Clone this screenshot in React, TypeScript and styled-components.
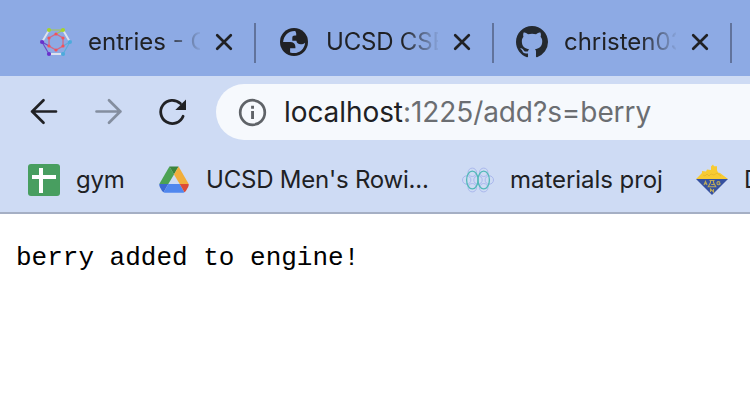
import React from "react";
import styled, { createGlobalStyle } from "styled-components";

const GlobalStyle = createGlobalStyle`
  body { margin: 0; background: #fff; overflow: hidden; }
  svg { display: block; flex: none; }
`;

const Window = styled.div`
  width: 750px;
  height: 412px;
  overflow: hidden;
  background: #fff;
  font-family: Inter, "Liberation Sans", sans-serif;
  color: #202124;
`;

const TabStrip = styled.div`
  display: flex;
  height: 76px;
  padding-left: 18px;
  background: #8daae4;
`;

const Tab = styled.div`
  box-sizing: border-box;
  display: flex;
  align-items: center;
  flex: none;
  width: 238px;
  height: 40px;
  margin-top: 23px;
  padding: 0 20px 0 22px;
  border-right: 2px solid #61739c;
`;

const TabIcon = styled.div`
  display: flex;
  justify-content: center;
  flex: none;
  width: 32px;
  margin-top: -2px;
`;

const TabTitle = styled.div<{ $spacing: number }>`
  flex: none;
  width: 112px;
  margin: -2px 0 0 16px;
  overflow: hidden;
  white-space: nowrap;
  font-size: 24px;
  line-height: 34px;
  letter-spacing: ${(p) => p.$spacing}px;
  mask-image: linear-gradient(to right, #000 68%, transparent 102%);
`;

const TabClose = styled.div`
  margin: -2px 0 0 14px;
`;

const Toolbar = styled.div`
  display: flex;
  align-items: center;
  height: 72px;
  background: #cedbf4;
`;

const NavButtons = styled.div`
  display: flex;
  flex: none;
  gap: 32px;
  width: 188px;
  padding-left: 28px;
`;

const AddressBar = styled.div`
  box-sizing: border-box;
  display: flex;
  align-items: center;
  gap: 17px;
  flex: none;
  width: 600px;
  height: 56px;
  padding-left: 22px;
  border-radius: 28px;
  background: #f6f9fd;
`;

const Url = styled.div`
  font-size: 28px;
  line-height: 36px;
  letter-spacing: -0.08px;
  white-space: nowrap;
  color: #6b6e72;
`;

const Host = styled.span`
  color: #202124;
`;

const BookmarksBar = styled.div`
  box-sizing: border-box;
  display: flex;
  height: 66px;
  padding: 16px 0 0 28px;
  border-bottom: 2px solid #a5afc4;
  background: #cedbf4;
`;

const Bookmark = styled.div<{ $width: number; $spacing?: number }>`
  display: flex;
  flex: none;
  gap: 16px;
  width: ${(p) => p.$width}px;
  height: 32px;
  font-size: 24px;
  line-height: 32px;
  letter-spacing: ${(p) => p.$spacing ?? 0}px;
  white-space: nowrap;
`;

const Page = styled.pre`
  margin: 0;
  padding: 29px 16px;
  font: 26px/30px "Liberation Mono", monospace;
  color: #000;
`;

const CloseIcon = () => (
  <svg width="20" height="20" viewBox="0 0 20 20" fill="none" stroke="#202124" strokeWidth="2.7" strokeLinecap="round">
    <path d="M3.2 3.2 16.8 16.8M16.8 3.2 3.2 16.8" />
  </svg>
);

const GraphIcon = () => (
  <svg width="32" height="32" viewBox="0 0 32 32" fill="none">
    <path d="M9 4 2 16M23 4 30 16M9 28h14" stroke="#dde2ee" strokeWidth="1.9" />
    <path d="M9 4h14l-7 4" stroke="#a5c84f" strokeWidth="1.2" />
    <path d="M9 28 2 16l7 4" stroke="#7047c8" strokeWidth="1.2" />
    <path d="m23 28 7-12-7 4" stroke="#5aaedb" strokeWidth="1.2" />
    <path d="m16 8 7 4v8l-7 4-7-4v-8z" stroke="#d06b88" strokeWidth="1.3" />
    <g fill="#f55258">
      <circle cx="16" cy="8" r="1.6" /><circle cx="23" cy="12" r="1.6" /><circle cx="23" cy="20" r="1.6" />
      <circle cx="16" cy="24" r="1.6" /><circle cx="9" cy="20" r="1.6" /><circle cx="9" cy="12" r="1.6" />
    </g>
    <g fill="#a5d42f"><circle cx="9" cy="4" r="2.1" /><circle cx="23" cy="4" r="2.1" /></g>
    <g fill="#6930cc"><circle cx="2.1" cy="16" r="2.1" /><circle cx="9" cy="28" r="2.1" /></g>
    <g fill="#4cabdc"><circle cx="29.9" cy="16" r="2.1" /><circle cx="23" cy="28" r="2.1" /></g>
  </svg>
);

const GlobeIcon = () => (
  <svg width="28" height="28" viewBox="0 0 28 28">
    <circle cx="14" cy="14" r="14" fill="#202124" />
    <path
      fill="#8daae4"
      d="M15.3 2.9C8.7 2.6 3.8 7.3 3.1 13.9H10c3.4 0 5.4 1.7 5.4 4.8v1.5h-5.3v4.2c7.4 2.6 14.4-2.5 15-9.7-1.3 1.1-2.6 1.5-4.3 1.5-2.7 0-4.2-1.2-4.4-3.5h-4.1V9.8c0-1.5.9-2.2 2.6-2.2h1.3V5.4c0-.9-.6-1.3-.9-2.5Z"
    />
  </svg>
);

const GithubIcon = () => (
  <svg width="32" height="32" viewBox="0 0 16 16" fill="#24292f">
    <path d="M8 0C3.58 0 0 3.58 0 8c0 3.54 2.29 6.53 5.47 7.59.4.07.55-.17.55-.38 0-.19-.01-.82-.01-1.49-2.01.37-2.53-.49-2.69-.94-.09-.23-.48-.94-.82-1.13-.28-.15-.68-.52-.01-.53.63-.01 1.08.58 1.23.82.72 1.21 1.87.87 2.33.66.07-.52.28-.87.51-1.07-1.78-.2-3.64-.89-3.64-3.95 0-.87.31-1.59.82-2.15-.08-.2-.36-1.02.08-2.12 0 0 .67-.21 2.2.82.64-.18 1.32-.27 2-.27s1.36.09 2 .27c1.53-1.04 2.2-.82 2.2-.82.44 1.1.16 1.92.08 2.12.51.56.82 1.27.82 2.15 0 3.07-1.87 3.75-3.65 3.95.29.25.54.73.54 1.48 0 1.07-.01 1.93-.01 2.2 0 .21.15.46.55.38A8.01 8.01 0 0 0 16 8c0-4.42-3.58-8-8-8Z" />
  </svg>
);

const ArrowIcon = ({ forward = false }: { forward?: boolean }) => (
  <svg width="32" height="32" viewBox="0 0 32 32" fill="none" stroke={forward ? "#848e9f" : "#202124"} strokeWidth="2.7" strokeLinecap="round" strokeLinejoin="round">
    <path d={forward ? "M4.5 15.5h24M17 4.2 28.3 15.5 17 26.8" : "M28 15.5H4M15.5 4.2 4.2 15.5l11.3 11.3"} />
  </svg>
);

const ReloadIcon = () => (
  <svg width="32" height="32" viewBox="0 0 32 32">
    <path d="M24.4 7.6A11.6 11.6 0 1 0 27.1 20.2" fill="none" stroke="#202124" strokeWidth="2.8" strokeLinecap="round" />
    <path d="M30 3.5v10.5H19.3Z" fill="#202124" />
  </svg>
);

const InfoIcon = () => (
  <svg width="29" height="29" viewBox="0 0 29 29">
    <circle cx="14.5" cy="14.5" r="12.3" fill="none" stroke="#5f6368" strokeWidth="2.7" />
    <path d="M13.1 7.8H16v2.9h-2.9zM13.1 13H16v8h-2.9z" fill="#5f6368" />
  </svg>
);

const SheetIcon = () => (
  <svg width="32" height="32" viewBox="0 0 32 32">
    <rect width="32" height="32" rx="3" fill="#489e60" />
    <path d="M4 11h7V4h4v7h13v4H15v14h-4V15H4z" fill="#fff" />
  </svg>
);

const DriveIcon = () => (
  <svg width="32" height="32" viewBox="0 0 32 32">
    <path d="M11.4 2.5 1.3 20h9L16 10.4Z" fill="#4ba253" />
    <path d="M11.4 2.5h9.2L16 10.4Z" fill="#3b843c" />
    <path d="M20.6 2.5 30.7 20h-9L16 10.4Z" fill="#f1ae3b" />
    <path d="M1.3 20h9l-4.7 8.2c-.8-.4-1.3-1-1.8-1.8L2 23.3c-.5-.9-.8-1.9-.7-3.3Z" fill="#3b69d1" />
    <path d="M10.3 20h11.4l4.7 8.2c-.6.4-1.3.5-2 .5H7.7c-.8 0-1.5-.1-2.1-.5Z" fill="#5087ee" />
    <path d="M21.7 20h9c.1 1.4-.2 2.4-.7 3.3l-1.8 3.1c-.5.8-1 1.4-1.8 1.8Z" fill="#dc4c37" />
  </svg>
);

const MaterialsIcon = () => (
  <svg width="32" height="32" viewBox="0 0 32 32" fill="none">
    <g stroke="#aab8ed" strokeWidth="1">
      <circle cx="10.3" cy="8.3" r="4.2" /><circle cx="21.7" cy="8.3" r="4.2" />
      <circle cx="4.7" cy="16" r="4.2" /><circle cx="16" cy="16" r="4.2" /><circle cx="27.3" cy="16" r="4.2" />
      <circle cx="10.3" cy="23.7" r="4.2" /><circle cx="21.7" cy="23.7" r="4.2" />
    </g>
    <g stroke="#53b9b9" strokeWidth="1.3">
      <ellipse cx="10.3" cy="16" rx="5.7" ry="8.9" /><ellipse cx="21.7" cy="16" rx="5.7" ry="8.9" />
    </g>
  </svg>
);

const CrestIcon = () => (
  <svg width="32" height="32" viewBox="0 0 32 32">
    <path d="M0 15 6 9V7l4 .5 1-2 4 .4V2.5l2-2 1 1.8h3v4l1 2.2 2 .5 8 6Z" fill="#f8cb32" />
    <path d="m7 11 2 1 2-2 2 2 2-2 3 1 3-2 4 3" fill="none" stroke="#e3b12c" strokeWidth=".7" />
    <path d="M0 15h32L16 31Z" fill="#36519f" />
    <path d="m8 21 1.5-3.5L11 21m-2.5-1.2h2M24 18.2c-2-1.4-3.2 0-3 1.3.2 1.6 2 1.6 3 .7v-1h-1.3M14.5 28v-3l3 3v-3M13.5 16.5h5m-4 0v2l-2.3 4.3h7.6l-2.3-4.3v-2m-2.3 4h3" fill="none" stroke="#baa95c" strokeWidth="1.1" />
  </svg>
);

const tabs = [
  { title: "entries - Google", icon: <GraphIcon />, spacing: 0 },
  { title: "UCSD CSE", icon: <GlobeIcon />, spacing: -0.2 },
  { title: "christen03", icon: <GithubIcon />, spacing: -0.02 },
];

const bookmarks = [
  { label: "gym", icon: <SheetIcon />, width: 130, spacing: -0.2 },
  { label: "UCSD Men's Rowi...", icon: <DriveIcon />, width: 304, spacing: -0.22 },
  { label: "materials proj", icon: <MaterialsIcon />, width: 234, spacing: -0.05 },
  { label: "D", icon: <CrestIcon />, width: 120, spacing: 0 },
];

export default function App() {
  return (
    <Window>
      <GlobalStyle />
      <TabStrip>
        {tabs.map((tab) => (
          <Tab key={tab.title}>
            <TabIcon>{tab.icon}</TabIcon>
            <TabTitle $spacing={tab.spacing}>{tab.title}</TabTitle>
            <TabClose><CloseIcon /></TabClose>
          </Tab>
        ))}
      </TabStrip>
      <Toolbar>
        <NavButtons>
          <ArrowIcon />
          <ArrowIcon forward />
          <ReloadIcon />
        </NavButtons>
        <AddressBar>
          <InfoIcon />
          <Url><Host>localhost</Host>:1225/add?s=berry</Url>
        </AddressBar>
      </Toolbar>
      <BookmarksBar>
        {bookmarks.map((b) => (
          <Bookmark key={b.label} $width={b.width} $spacing={b.spacing}>
            {b.icon}
            <span>{b.label}</span>
          </Bookmark>
        ))}
      </BookmarksBar>
      <Page>berry added to engine!</Page>
    </Window>
  );
}
